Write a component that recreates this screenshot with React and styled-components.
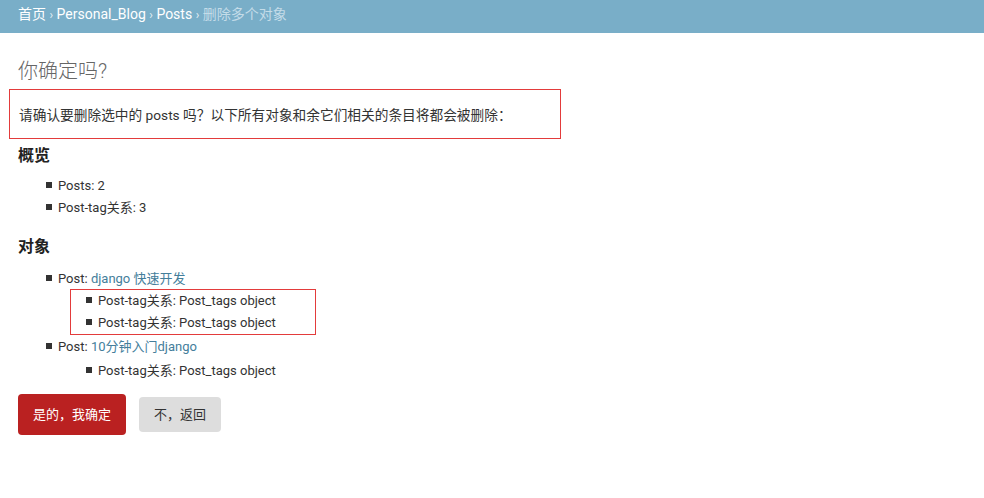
import styled, { createGlobalStyle } from 'styled-components'

const TEXT = '#333'
const LINK = '#447e9b'
const HEADER = '#79aec8'
const MARK = '#e33b3b'

const Global = createGlobalStyle`
	html, body {
		margin: 0;
		padding: 0;
		background: #fff;
	}
	body {
		font-family: Roboto, 'Noto Sans CJK SC', 'Liberation Sans', sans-serif;
		font-size: 13px;
		color: ${TEXT};
	}
`

const Breadcrumbs = styled.div`
	height: 33px;
	box-sizing: border-box;
	background: ${HEADER};
	padding: 5px 18px 0;
	font-size: 14px;
	line-height: 18px;
	color: #fff;
`
const Crumb = styled.span`
	color: ${(p) => (p.$current ? '#c4dce8' : '#fff')};
`
const Sep = styled.span`
	color: #e4eff5;
	font-size: 12px;
	margin: 0 3.5px;
`

const Content = styled.div`
	padding: 0 18px;
	display: flex;
	flex-direction: column;
	align-items: flex-start;
`
const Title = styled.h1`
	margin: 26px 0 6px;
	font-size: 20px;
	line-height: 24px;
	font-weight: 300;
	color: #666;
`
const Notice = styled.p`
	margin: 0 0 0 -9px;
	width: 552px;
	box-sizing: border-box;
	border: 1px solid ${MARK};
	padding: 16px 9px 14px;
	font-size: 13.7px;
	line-height: 18px;
`
const Heading = styled.h2`
	margin: ${(p) => p.$margin};
	font-size: 16px;
	line-height: 20px;
	font-weight: 700;
	color: #222;
`
const List = styled.ul`
	list-style: none;
	margin: ${(p) => p.$margin || '0'};
	padding: 0 0 0 28px;
`
const SubList = styled.ul`
	list-style: none;
	margin: ${(p) => p.$gap || '0'} 0 0 24px;
	padding: 0 0 0 15px;
	width: 246px;
	box-sizing: border-box;
	border: 1px solid ${(p) => (p.$marked ? MARK : 'transparent')};
	${(p) => (p.$marked ? '' : 'border-width: 0 0 0 1px;')}
`
const Item = styled.li`
	font-size: 13px;
	line-height: 20px;
	padding: 1px 0;
	white-space: nowrap;
	&::before {
		content: '';
		display: inline-block;
		width: 6px;
		height: 6px;
		background: #333;
		margin-right: 6px;
		vertical-align: 2px;
	}
`
const Link = styled.a`
	color: ${LINK};
	text-decoration: none;
`

const Actions = styled.div`
	display: flex;
	align-items: center;
	gap: 13px;
	margin-top: 11px;
`
const Confirm = styled.button`
	font: inherit;
	font-size: 13px;
	line-height: 19px;
	padding: 11px 15px;
	border: none;
	border-radius: 4px;
	background: #ba2121;
	color: #fff;
`
const Cancel = styled.a`
	display: inline-block;
	line-height: 15px;
	padding: 10px 15px;
	border-radius: 4px;
	background: #ddd;
	color: ${TEXT};
	text-decoration: none;
`

export default function App() {
	return (
		<>
			<Global />
			<Breadcrumbs>
				<Crumb>首页</Crumb>
				<Sep>›</Sep>
				<Crumb>Personal_Blog</Crumb>
				<Sep>›</Sep>
				<Crumb>Posts</Crumb>
				<Sep>›</Sep>
				<Crumb $current>删除多个对象</Crumb>
			</Breadcrumbs>
			<Content>
				<Title>你确定吗?</Title>
				<Notice>
					请确认要删除选中的 posts 吗？以下所有对象和余它们相关的条目将都会被删除：
				</Notice>
				<Heading $margin="7px 0 0">概览</Heading>
				<List $margin="9px 0 0">
					<Item>Posts: 2</Item>
					<Item>Post-tag关系: 3</Item>
				</List>
				<Heading $margin="18px 0 0">对象</Heading>
				<List $margin="11px 0 0">
					<Item>
						Post: <Link href="#">django 快速开发</Link>
						<SubList $marked>
							<Item>Post-tag关系: Post_tags object</Item>
							<Item>Post-tag关系: Post_tags object</Item>
						</SubList>
					</Item>
					<Item>
						Post: <Link href="#">10分钟入门django</Link>
						<SubList $gap="3px">
							<Item>Post-tag关系: Post_tags object</Item>
						</SubList>
					</Item>
				</List>
				<Actions>
					<Confirm type="button">是的，我确定</Confirm>
					<Cancel href="#">不，返回</Cancel>
				</Actions>
			</Content>
		</>
	)
}
